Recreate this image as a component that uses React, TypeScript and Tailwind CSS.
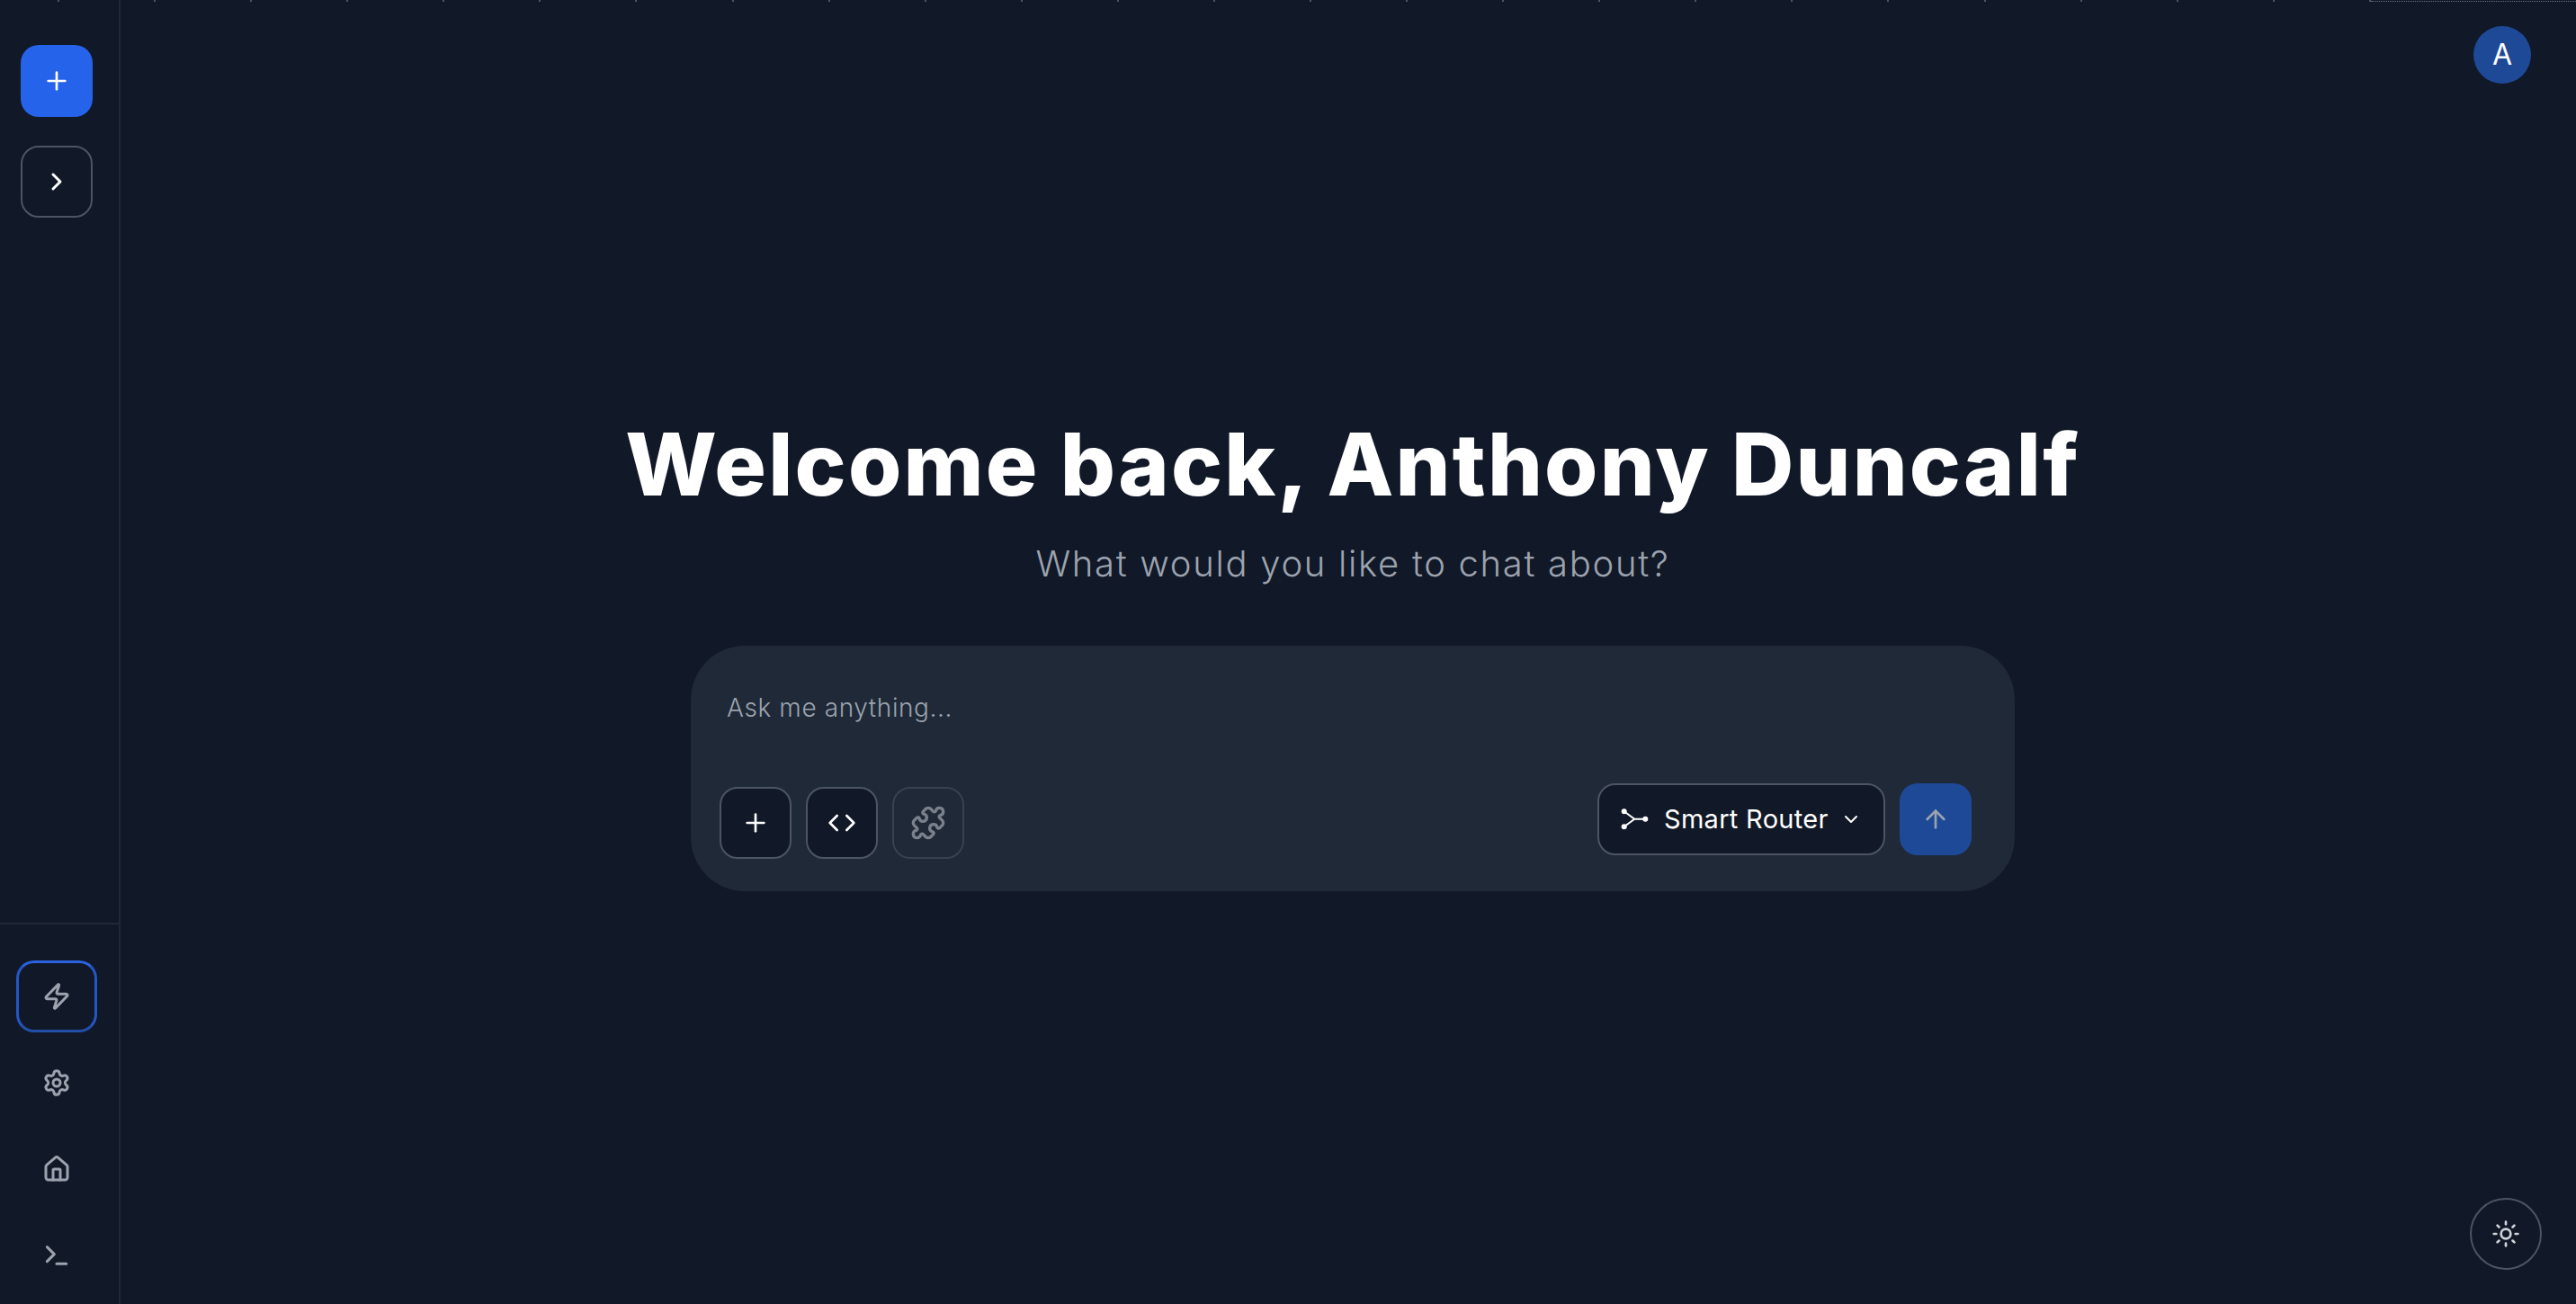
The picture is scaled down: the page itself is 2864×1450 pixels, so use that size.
import { Plus, ChevronRight, ChevronDown, Zap, Settings, House, Terminal, Code, Puzzle, ArrowUp, Sun } from "lucide-react";

const ticks = Array.from({ length: 25 }, (_, i) => i);

function Router() {
  return (
    <svg width="32" height="32" viewBox="0 0 32 32" fill="none" stroke="white" strokeWidth="2" className="shrink-0">
      <circle cx="3.700" cy="7.300" r="3" fill="white" stroke="none" />
      <circle cx="3.700" cy="24.300" r="3" fill="white" stroke="none" />
      <circle cx="27.300" cy="15.700" r="3" fill="white" stroke="none" />
      <path d="M4 7.500 15.300 15.700H27M4 24 15.300 15.700" />
    </svg>
  );
}

export default function App() {
  return (
    <div className="relative flex h-[1450px] w-[2864px] overflow-hidden bg-[#111827] font-['Inter','Liberation_Sans',sans-serif]">
      <div className="absolute left-[64px] top-0 flex h-[2px] w-[2572px] justify-between">
        {ticks.map((i) => (
          <span key={i} className="h-[2px] w-[2px] bg-[#4b5563]" />
        ))}
      </div>
      <div className="absolute right-0 top-[1px] w-[228px] border-t border-dotted border-[#6b7280]" />

      <aside className="flex h-full w-[134px] shrink-0 flex-col border-r-2 border-[#1f2937]">
        <div className="flex flex-1 flex-col items-center gap-[32px] pr-[6px] pt-[50px]">
          <button className="flex h-[80px] w-[80px] items-center justify-center rounded-[20px] bg-[#2563eb] text-white">
            <Plus size={32} strokeWidth={2} />
          </button>
          <button className="flex h-[80px] w-[80px] items-center justify-center rounded-[20px] border-2 border-[#4b5563] text-white">
            <ChevronRight size={32} strokeWidth={2.250} />
          </button>
        </div>
        <div className="flex flex-col items-center border-t-2 border-[#1f2937] pb-[14px] pr-[6px] pt-[40px] text-[#9ca3af]">
          <button className="flex h-[80px] w-[90px] items-center justify-center rounded-[20px] border-[3px] border-[#2457c5] border-t-[#2a62e0] border-b-[#234fa8]">
            <Zap size={32} strokeWidth={2.250} />
          </button>
          <div className="mt-[16px] flex h-[80px] items-center justify-center">
            <Settings size={32} strokeWidth={2.250} />
          </div>
          <div className="mt-[16px] flex h-[80px] items-center justify-center">
            <House size={32} strokeWidth={2.250} />
          </div>
          <div className="mt-[16px] flex h-[80px] items-center justify-center">
            <Terminal size={32} strokeWidth={2.250} />
          </div>
        </div>
      </aside>

      <main className="relative flex flex-1 flex-col items-center pl-[10px] pt-[452px]">
        <h1 className="text-[96px] font-extrabold leading-[128px] tracking-[2.200px] text-white">Welcome back, Anthony Duncalf</h1>
        <p className="mt-[19px] text-[40px] font-light leading-[56px] tracking-[1.700px] text-[#9ca3af]">What would you like to chat about?</p>
        <div className="mt-[63px] flex h-[273px] w-[1472px] flex-col justify-between rounded-[60px] bg-[#1f2937] pb-[36px] pl-[32px] pr-[48px] pt-[49px]">
          <div className="pl-[8px] text-[28px] font-light leading-[40px] tracking-[0.600px] text-[#9ca3af]">Ask me anything...</div>
          <div className="flex items-end justify-between">
            <div className="flex gap-[16px]">
              <button className="flex h-[80px] w-[80px] items-center justify-center rounded-[20px] border-2 border-[#4b5563] bg-[#111827] text-white">
                <Plus size={32} strokeWidth={2} />
              </button>
              <button className="flex h-[80px] w-[80px] items-center justify-center rounded-[20px] border-2 border-[#4b5563] bg-[#111827] text-white">
                <Code size={32} strokeWidth={2} />
              </button>
              <button className="flex h-[80px] w-[80px] items-center justify-center rounded-[20px] border-2 border-[#374151] text-[#7b818c]">
                <Puzzle size={40} strokeWidth={2} />
              </button>
            </div>
            <div className="mb-[4px] flex gap-[16px]">
              <button className="flex h-[80px] w-[320px] items-center rounded-[20px] border-2 border-[#4b5563] bg-[#111827] pl-[24px] text-[29px] text-white">
                <Router />
                <span className="ml-[16px] font-normal tracking-[0.300px]">Smart Router</span>
                <ChevronDown size={24} strokeWidth={2} className="ml-[13px]" />
              </button>
              <button className="flex h-[80px] w-[80px] items-center justify-center rounded-[20px] bg-[#1e4997] text-[#9ca3af]">
                <ArrowUp size={32} strokeWidth={2} />
              </button>
            </div>
          </div>
        </div>
        <div className="absolute right-[50px] top-[29px] flex h-[64px] w-[64px] items-center justify-center rounded-full bg-[#1e4997] text-[32px] font-normal text-white">A</div>
        <button className="absolute bottom-[38px] right-[38px] flex h-[80px] w-[80px] items-center justify-center rounded-full border-2 border-[#4b5563] text-[#d1d5db]">
          <Sun size={32} strokeWidth={2} />
        </button>
      </main>
    </div>
  );
}
